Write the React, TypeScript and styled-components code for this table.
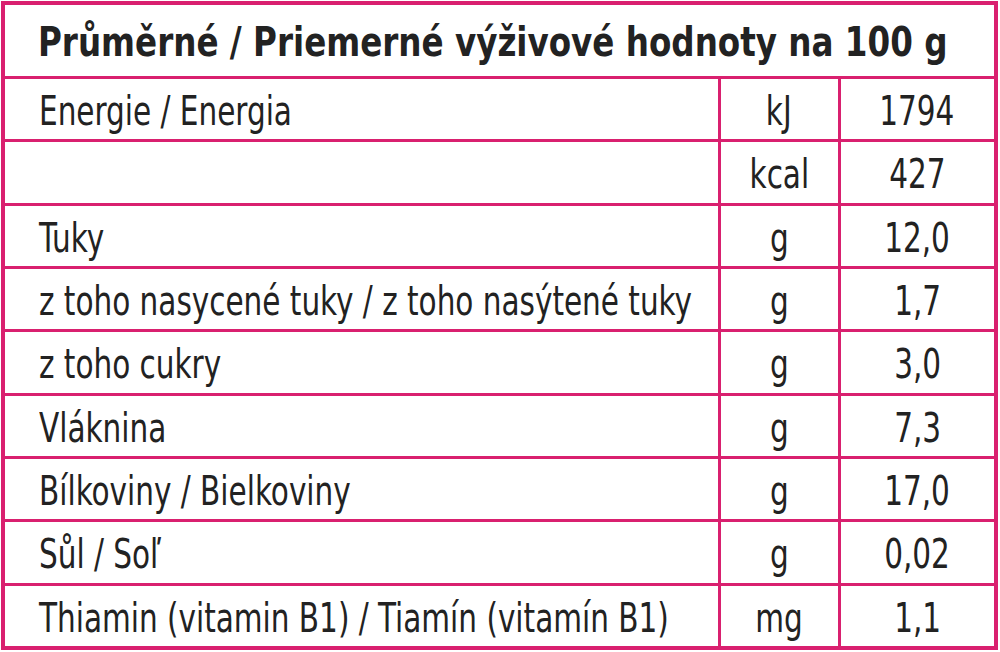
import styled, { createGlobalStyle } from 'styled-components';

const GlobalStyle = createGlobalStyle`
  html, body {
    margin: 0;
    padding: 0;
    background: #ffffff;
  }
`;

const PINK = '#d9206f';

const Table = styled.table`
  width: 997px;
  height: 649px;
  margin: 1px 0 0 1px;
  border-collapse: collapse;
  border: 4px solid ${PINK};
  font-family: 'DejaVu Sans Condensed', 'Liberation Sans', sans-serif;
  color: #222222;
  table-layout: fixed;
`;

const HeadCell = styled.th`
  height: 68px;
  padding: 3px 0 0 33px;
  border: 3px solid ${PINK};
  text-align: left;
  font-size: 40px;
  line-height: 1.1;
  font-weight: 700;
  white-space: nowrap;
`;

const Cell = styled.td<{ $align?: 'left' | 'center' }>`
  height: 52px;
  padding: ${(p) => (p.$align === 'center' ? '4px 0 0 0' : '4px 0 0 34px')};
  border: 3px solid ${PINK};
  text-align: ${(p) => p.$align ?? 'left'};
  font-size: 40px;
  line-height: 1.1;
  font-weight: 400;
  white-space: nowrap;
`;

// the reference face is narrower than any installed one, so squeeze it
const Squeeze = styled.span<{ $scale: number; $origin?: 'left' | 'center' }>`
  display: inline-block;
  transform: scaleX(${(p) => p.$scale});
  transform-origin: ${(p) => p.$origin ?? 'left'} center;
`;

const rows: [string, string, string][] = [
  ['Energie / Energia', 'kJ', '1794'],
  ['', 'kcal', '427'],
  ['Tuky', 'g', '12,0'],
  ['z toho nasycené tuky / z toho nasýtené tuky', 'g', '1,7'],
  ['z toho cukry', 'g', '3,0'],
  ['Vláknina', 'g', '7,3'],
  ['Bílkoviny / Bielkoviny', 'g', '17,0'],
  ['Sůl / Soľ', 'g', '0,02'],
  ['Thiamin (vitamin B1) / Tiamín (vitamín B1)', 'mg', '1,1'],
];

function App() {
  return (
    <>
      <GlobalStyle />
      <Table>
        <colgroup>
          <col style={{ width: 716 }} />
          <col style={{ width: 120 }} />
          <col />
        </colgroup>
        <thead>
          <tr>
            <HeadCell colSpan={3}>
              <Squeeze $scale={0.905}>Průměrné / Priemerné výživové hodnoty na 100 g</Squeeze>
            </HeadCell>
          </tr>
        </thead>
        <tbody>
          {rows.map(([name, unit, value], i) => (
            <tr key={i}>
              <Cell>
                <Squeeze $scale={0.82}>{name}</Squeeze>
              </Cell>
              <Cell $align="center">
                <Squeeze $scale={0.82} $origin="center">{unit}</Squeeze>
              </Cell>
              <Cell $align="center">
                <Squeeze $scale={0.82} $origin="center">{value}</Squeeze>
              </Cell>
            </tr>
          ))}
        </tbody>
      </Table>
    </>
  );
}

export default App;
